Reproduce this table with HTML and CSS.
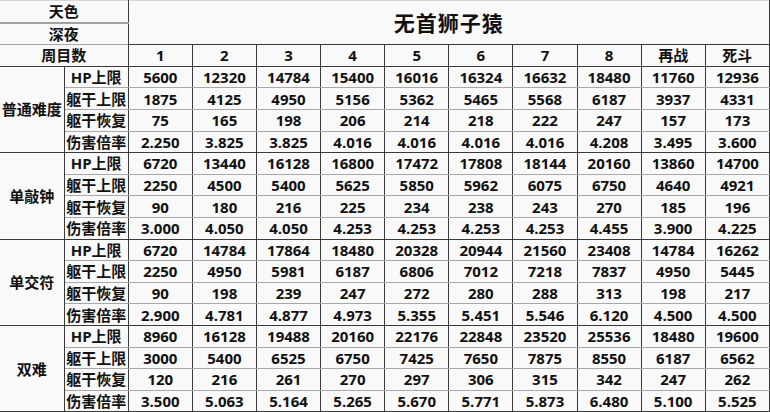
FILE: index.html
```html
<!DOCTYPE html>
<html lang="zh">
<head>
<meta charset="utf-8">
<link rel="stylesheet" href="styles.css">
</head>
<body>
<table class="sheet">
  <colgroup>
    <col><col><col><col><col><col><col><col><col><col><col><col>
  </colgroup>
  <tr class="top">
    <td colspan="2" class="hd gray-b">天色</td>
    <td colspan="10" rowspan="2" class="title">无首狮子猿</td>
  </tr>
  <tr>
    <td colspan="2" class="hd">深夜</td>
  </tr>
  <tr class="cols">
    <td colspan="2" class="hd">周目数</td>
    <td>1</td><td>2</td><td>3</td><td>4</td><td>5</td><td>6</td><td>7</td><td>8</td><td>再战</td><td>死斗</td>
  </tr>

  <tr class="g-first">
    <td rowspan="4" class="grp">普通难度</td>
    <td>HP上限</td><td>5600</td><td>12320</td><td>14784</td><td>15400</td><td>16016</td><td>16324</td><td>16632</td><td>18480</td><td>11760</td><td>12936</td>
  </tr>
  <tr>
    <td>躯干上限</td><td>1875</td><td>4125</td><td>4950</td><td>5156</td><td>5362</td><td>5465</td><td>5568</td><td>6187</td><td>3937</td><td>4331</td>
  </tr>
  <tr>
    <td>躯干恢复</td><td>75</td><td>165</td><td>198</td><td>206</td><td>214</td><td>218</td><td>222</td><td>247</td><td>157</td><td>173</td>
  </tr>
  <tr class="g-last">
    <td>伤害倍率</td><td>2.250</td><td>3.825</td><td>3.825</td><td>4.016</td><td>4.016</td><td>4.016</td><td>4.016</td><td>4.208</td><td>3.495</td><td>3.600</td>
  </tr>

  <tr class="g-first">
    <td rowspan="4" class="grp">单敲钟</td>
    <td>HP上限</td><td>6720</td><td>13440</td><td>16128</td><td>16800</td><td>17472</td><td>17808</td><td>18144</td><td>20160</td><td>13860</td><td>14700</td>
  </tr>
  <tr>
    <td>躯干上限</td><td>2250</td><td>4500</td><td>5400</td><td>5625</td><td>5850</td><td>5962</td><td>6075</td><td>6750</td><td>4640</td><td>4921</td>
  </tr>
  <tr>
    <td>躯干恢复</td><td>90</td><td>180</td><td>216</td><td>225</td><td>234</td><td>238</td><td>243</td><td>270</td><td>185</td><td>196</td>
  </tr>
  <tr class="g-last">
    <td>伤害倍率</td><td>3.000</td><td>4.050</td><td>4.050</td><td>4.253</td><td>4.253</td><td>4.253</td><td>4.253</td><td>4.455</td><td>3.900</td><td>4.225</td>
  </tr>

  <tr class="g-first">
    <td rowspan="4" class="grp">单交符</td>
    <td>HP上限</td><td>6720</td><td>14784</td><td>17864</td><td>18480</td><td>20328</td><td>20944</td><td>21560</td><td>23408</td><td>14784</td><td>16262</td>
  </tr>
  <tr>
    <td>躯干上限</td><td>2250</td><td>4950</td><td>5981</td><td>6187</td><td>6806</td><td>7012</td><td>7218</td><td>7837</td><td>4950</td><td>5445</td>
  </tr>
  <tr>
    <td>躯干恢复</td><td>90</td><td>198</td><td>239</td><td>247</td><td>272</td><td>280</td><td>288</td><td>313</td><td>198</td><td>217</td>
  </tr>
  <tr class="g-last">
    <td>伤害倍率</td><td>2.900</td><td>4.781</td><td>4.877</td><td>4.973</td><td>5.355</td><td>5.451</td><td>5.546</td><td>6.120</td><td>4.500</td><td>4.500</td>
  </tr>

  <tr class="g-first">
    <td rowspan="4" class="grp">双难</td>
    <td>HP上限</td><td>8960</td><td>16128</td><td>19488</td><td>20160</td><td>22176</td><td>22848</td><td>23520</td><td>25536</td><td>18480</td><td>19600</td>
  </tr>
  <tr>
    <td>躯干上限</td><td>3000</td><td>5400</td><td>6525</td><td>6750</td><td>7425</td><td>7650</td><td>7875</td><td>8550</td><td>6187</td><td>6562</td>
  </tr>
  <tr>
    <td>躯干恢复</td><td>120</td><td>216</td><td>261</td><td>270</td><td>297</td><td>306</td><td>315</td><td>342</td><td>247</td><td>262</td>
  </tr>
  <tr class="g-last">
    <td>伤害倍率</td><td>3.500</td><td>5.063</td><td>5.164</td><td>5.265</td><td>5.670</td><td>5.771</td><td>5.873</td><td>6.480</td><td>5.100</td><td>5.525</td>
  </tr>
</table>
</body>
</html>
```

FILE: styles.css
```css
html, body {
  margin: 0;
  padding: 0;
  background: #f9f9f9;
}

.sheet {
  border-collapse: collapse;
  table-layout: fixed;
  width: 770px;
  font-family: "Open Sans", "Noto Sans CJK SC", sans-serif;
  font-weight: bold;
  font-size: 15px;
  color: #111;
}

.sheet col {
  width: 64px;
}

.sheet td {
  height: 20.6px;
  padding: 0;
  line-height: 18px;
  text-align: center;
  vertical-align: middle;
  white-space: nowrap;
  overflow: hidden;
  border-left: 1px solid #3a3a3a;
  border-right: 1px solid #3a3a3a;
  border-top: 1px solid #a8a8a8;
  border-bottom: 1px solid #a8a8a8;
}

.sheet td:first-child {
  border-left: none;
}

.sheet .top td {
  border-top: 1px solid #d6d6d6;
}

.sheet .hd.gray-b {
  border-bottom: 2px solid #a0a0a0;
}

.sheet .title {
  font-size: 21px;
  letter-spacing: 1px;
  border-bottom: 1px solid #3a3a3a;
}

.sheet .cols td {
  border-top: 1px solid #3a3a3a;
  border-bottom: 1px solid #3a3a3a;
}

.sheet .g-first td {
  border-top: 1px solid #3a3a3a;
}

.sheet .g-last td,
.sheet .grp {
  border-bottom: 1px solid #3a3a3a;
}

.sheet .grp {
  border-left: none;
}
```
